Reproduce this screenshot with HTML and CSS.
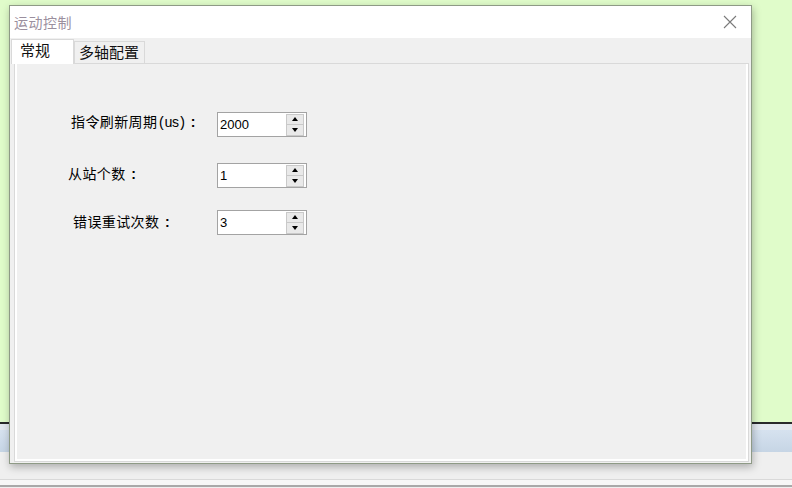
FILE: index.html
```html
<!DOCTYPE html>
<html lang="zh">
<head>
<meta charset="utf-8">
<title>运动控制</title>
<link rel="stylesheet" href="styles.css">
</head>
<body>
<div class="desktop">
  <div class="green"></div>
  <div class="gap"></div>
  <div class="band"></div>
  <div class="floor"></div>
  <div class="line1"></div>
  <div class="floor2"></div>
  <div class="line2"></div>
</div>

<div class="dialog">
  <div class="titlebar">
    <span class="title">运动控制</span>
    <svg class="close" width="14" height="14" viewBox="0 0 14 14"><path d="M1 1 L13 13 M13 1 L1 13" stroke="#7a7a7a" stroke-width="1.1" fill="none"/></svg>
  </div>
  <div class="client">
    <div class="tabs">
      <div class="tab active">常规</div>
      <div class="tab">多轴配置</div>
    </div>
    <div class="pane">
      <div class="pane-inner">
        <div class="row r1">
          <span class="label l1">指令刷新周期<span class="us">(us)</span><span class="colon">:</span></span>
          <div class="spin"><span class="val">2000</span><div class="btns"><div class="btn up"><i></i></div><div class="btn down"><i></i></div></div></div>
        </div>
        <div class="row r2">
          <span class="label l2">从站个数<span class="colon">:</span></span>
          <div class="spin"><span class="val">1</span><div class="btns"><div class="btn up"><i></i></div><div class="btn down"><i></i></div></div></div>
        </div>
        <div class="row r3">
          <span class="label l3">错误重试次数<span class="colon">:</span></span>
          <div class="spin"><span class="val">3</span><div class="btns"><div class="btn up"><i></i></div><div class="btn down"><i></i></div></div></div>
        </div>
      </div>
    </div>
  </div>
</div>
</body>
</html>
```

FILE: styles.css
```css
* { box-sizing: border-box; }
html, body { margin: 0; padding: 0; }
body {
  width: 792px; height: 488px; overflow: hidden;
  background: #efefef;
  font-family: "Noto Sans CJK SC", "Noto Sans", sans-serif;
  position: relative;
}
.desktop { display: flex; flex-direction: column; width: 792px; height: 488px; }
.green { height: 424px; background: #e0fcca; border-bottom: 2px solid #2a2a2a; flex: none; }
.gap { height: 6px; background: #e4e9ef; flex: none; }
.band { height: 22px; background: linear-gradient(#d6e2ef, #c6d5e5); flex: none; }
.floor { height: 27px; background: #efefef; flex: none; }
.line1 { height: 1px; background: #d9d9d9; flex: none; }
.floor2 { height: 5px; background: #f7f7f7; flex: none; }
.line2 { height: 2px; background: #a9a9a9; flex: none; }

.dialog {
  position: absolute; left: 9px; top: 5px;
  width: 743px; height: 459px;
  border: 1px solid #8e9a86;
  background: #f0f0f0;
  box-shadow: 1px 3px 8px rgba(0,0,0,0.28);
  display: flex; flex-direction: column;
}
.titlebar {
  height: 32px; flex: none; background: #fff;
  display: flex; align-items: center; justify-content: space-between;
  padding: 0 14px 0 4px;
}
.title { font-size: 14px; color: #9b8f9e; letter-spacing: 0.5px; line-height: 1; }
.close { display: block; }

.client { flex: 1; display: flex; flex-direction: column; padding: 1px; }
.tabs { display: flex; align-items: flex-end; height: 24px; flex: none; position: relative; z-index: 2; }
.tab {
  font-size: 15px; line-height: 1; color: #111;
  border: 1px solid #d9d9d9; border-bottom: none;
  background: #f0f0f0;
  height: 22px; padding: 2px 4px 0 4px;
}
.tab + .tab { width: 71px; }
.tab.active {
  height: 25px; width: 63px; margin-bottom: -1px;
  background: #fff; padding: 2px 0 0 8px;
}
.pane {
  flex: 1; border: 1px solid #d9d9d9; background: #fff;
  padding: 0 2px 2px 2px; margin-left: 3px; margin-right: 1px;
}
.pane-inner { height: 100%; background: #f0f0f0; border-left: 1px solid #f0f0f0; padding-top: 48px; }
.row { display: flex; align-items: center; height: 25px; }
.r2 { margin-top: 26px; }
.r3 { margin-top: 22px; }
.label { font-size: 14px; color: #000; line-height: 16px; white-space: nowrap; letter-spacing: 0.4px; flex: none; }
.us { font-size: 14px; font-family: "Liberation Mono", monospace; letter-spacing: -1.5px; margin-left: 0; }
.colon { font-family: "Liberation Sans", sans-serif; font-size: 14px; font-weight: bold; display: inline-block; width: 16px; text-align: center; letter-spacing: 0; }
.l1 { margin-left: 53px; width: 146px; margin-bottom: 5px; }
.l2 { margin-left: 50px; width: 149px; margin-bottom: 4px; }
.l3 { margin-left: 55px; width: 144px; margin-bottom: 2px; }
.spin {
  width: 90px; height: 25px; background: #fff; border: 1px solid #a3a3a3;
  display: flex; align-items: center; justify-content: space-between;
  padding: 1px; flex: none;
}
.val { font-family: "Liberation Sans", Arial, sans-serif; font-size: 13px; padding-left: 1px; color: #000; }
.btns { width: 18px; height: 22px; display: flex; flex-direction: column; margin-right: 1px; border: 1px solid #c9c9c9; background: #e9e9e9; }
.btn { flex: 1; display: flex; align-items: center; justify-content: center; }
.btn.up { border-bottom: 1px solid #c9c9c9; }
.btn i { display: block; width: 0; height: 0; border-left: 3.5px solid transparent; border-right: 3.5px solid transparent; }
.btn.up i { border-bottom: 4px solid #000; }
.btn.down i { border-top: 4px solid #000; }
```
